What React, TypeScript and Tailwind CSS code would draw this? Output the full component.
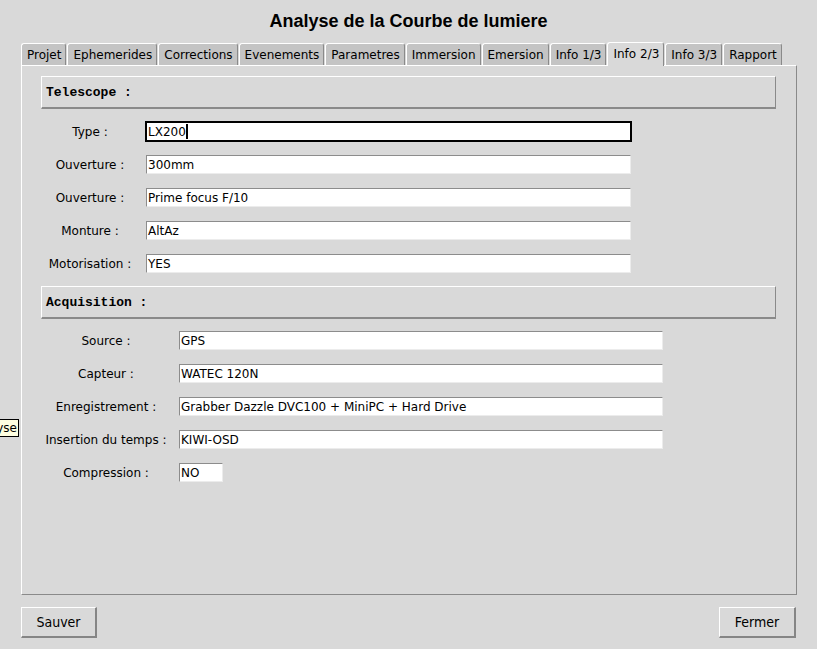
import React from 'react';

const tabs = ['Projet', 'Ephemerides', 'Corrections', 'Evenements', 'Parametres', 'Immersion', 'Emersion', 'Info 1/3', 'Info 2/3', 'Info 3/3', 'Rapport'];

const telescope = [
  { label: 'Type :', value: 'LX200', focused: true },
  { label: 'Ouverture :', value: '300mm' },
  { label: 'Ouverture :', value: 'Prime focus F/10' },
  { label: 'Monture :', value: 'AltAz' },
  { label: 'Motorisation :', value: 'YES' },
];

const acquisition = [
  { label: 'Source :', value: 'GPS' },
  { label: 'Capteur :', value: 'WATEC 120N' },
  { label: 'Enregistrement :', value: 'Grabber Dazzle DVC100 + MiniPC + Hard Drive' },
  { label: 'Insertion du temps :', value: 'KIWI-OSD' },
  { label: 'Compression :', value: 'NO', small: true },
];

function SectionHeader({ title }: { title: string }) {
  return (
    <div className="h-[33px] flex items-center pl-[4px] pt-[2px] border-t border-l border-t-white border-l-white border-b-2 border-r border-b-[#8a8a8a] border-r-[#8a8a8a]">
      <span className="font-['Liberation_Mono',monospace] font-bold text-[13px] text-black">{title}</span>
    </div>
  );
}

function Field({ value, focused, width }: { value: string; focused?: boolean; width: string }) {
  if (focused) {
    return (
      <div className={`ml-[-1px] h-[21px] bg-white border-2 border-black flex items-center pl-[1px] text-[12px] text-black ${width}`}>
        {value}
        <span className="inline-block w-[2px] h-[15px] bg-black" />
      </div>
    );
  }
  return (
    <div className={`h-[19px] bg-white border-t border-l border-t-[#8c8c8c] border-l-[#8c8c8c] border-b border-r border-b-[#ececec] border-r-[#ececec] flex items-center pl-[1px] text-[12px] text-black ${width}`}>
      {value}
    </div>
  );
}

export default function App() {
  return (
    <div className="relative w-[817px] h-[649px] overflow-hidden bg-[#d9d9d9] font-['DejaVu_Sans',sans-serif] text-black">
      {/* Title */}
      <div className="h-[42px] flex items-center justify-center pt-[1px]">
        <h1 className="font-['Liberation_Sans',Arial,sans-serif] font-bold text-[18px] text-black">Analyse de la Courbe de lumiere</h1>
      </div>

      {/* Tabs */}
      <div className="flex items-end h-[23px] pl-[21px]">
        {tabs.map(t => {
          const active = t === 'Info 2/3';
          return (
            <div
              key={t}
              className={`pl-[5px] pr-[4px] flex items-center text-[12px] rounded-t-[3px] border-t border-l border-r border-t-white border-l-white border-r-[#8a8a8a] mr-[1px] ${
                active ? 'h-[24px] bg-[#d9d9d9] relative z-10 -mb-[1px] pb-[1px]' : 'h-[22px] bg-[#c4c4c4]'
              }`}
            >
              {t}
            </div>
          );
        })}
      </div>

      {/* Panel */}
      <div className="mx-[21px] w-[776px] h-[530px] border-t border-l border-t-white border-l-white border-r border-b border-r-[#8a8a8a] border-b-[#8a8a8a] pt-[10px] pl-[19px] pr-[20px]">
        <SectionHeader title="Telescope :" />
        <div className="mt-[6px] flex flex-col">
          {telescope.map((r, i) => (
            <div key={i} className="h-[33px] flex items-center">
              <div className="w-[98px] text-center text-[12px]">{r.label}</div>
              <div className="ml-[7px]">
                <Field value={r.value} focused={r.focused} width={r.focused ? 'w-[487px]' : 'w-[485px]'} />
              </div>
            </div>
          ))}
        </div>

        <div className="mt-[6px]">
          <SectionHeader title="Acquisition :" />
        </div>
        <div className="mt-[5px] flex flex-col">
          {acquisition.map((r, i) => (
            <div key={i} className="h-[33px] flex items-center">
              <div className="w-[130px] text-center text-[12px]">{r.label}</div>
              <div className="ml-[8px]">
                <Field value={r.value} width={r.small ? 'w-[44px]' : 'w-[484px]'} />
              </div>
            </div>
          ))}
        </div>
      </div>

      {/* Buttons */}
      <div className="flex justify-between pl-[21px] pr-[21px] mt-[12px]">
        <button className="w-[76px] h-[31px] bg-[#d9d9d9] border-t border-l border-t-white border-l-white border-b-2 border-r-2 border-b-[#858585] border-r-[#858585] font-['DejaVu_Sans_Condensed','DejaVu_Sans',sans-serif] text-[14px] text-black">
          Sauver
        </button>
        <button className="w-[77px] h-[31px] bg-[#d9d9d9] border-t border-l border-t-white border-l-white border-b-2 border-r-2 border-b-[#858585] border-r-[#858585] font-['DejaVu_Sans_Condensed','DejaVu_Sans',sans-serif] text-[14px] text-black">
          Fermer
        </button>
      </div>

      {/* Tooltip clipped at left edge */}
      <div className="absolute left-[-40px] top-[419px] h-[18px] w-[59px] bg-[#ffffe1] border border-black flex items-center justify-end pr-[1px] text-[12px] text-black">
        Analyse
      </div>
    </div>
  );
}
